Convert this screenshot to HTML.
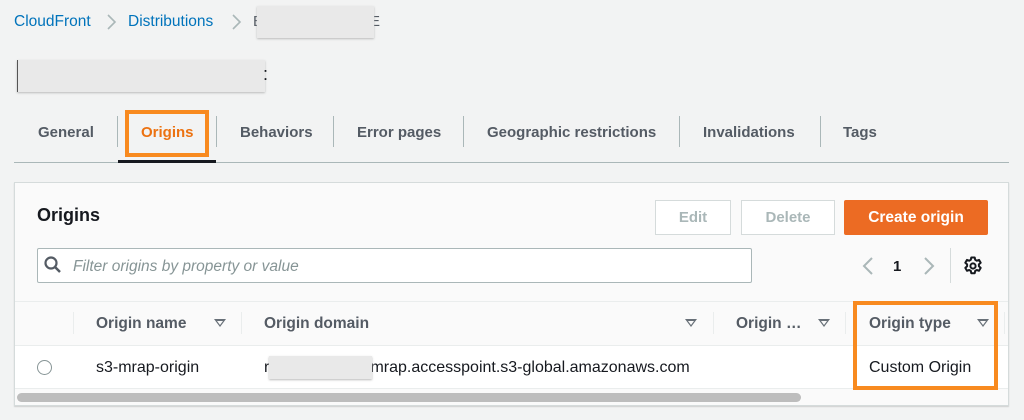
<!DOCTYPE html>
<html><head><style>
*{box-sizing:border-box;margin:0;padding:0}
body{width:1024px;height:420px;background:#f2f3f3;font-family:"Liberation Sans",Arial,sans-serif;position:relative;overflow:hidden;color:#16191f}
.a{position:absolute;white-space:nowrap}
.bc{color:#0073bb;font-size:15.5px;top:13px}
.tab{top:124px;font-size:15px;font-weight:bold;color:#545b64}
.sep{position:absolute;width:1px;background:#aab7b8}
.th{top:315px;font-size:15.5px;font-weight:bold;color:#545b64}
.tri{position:absolute;top:319px;width:0;height:0;border-left:6px solid transparent;border-right:6px solid transparent;border-top:8px solid #687078}
.tri:after{content:"";position:absolute;left:-3px;top:-6.5px;border-left:3px solid transparent;border-right:3px solid transparent;border-top:4px solid #fafafa}
</style></head><body>
<div class="a bc" style="left:14px">CloudFront</div>
<svg class="a" style="left:105px;top:12px" width="12" height="20"><path d="M3 3 L10 10 L3 17" fill="none" stroke="#aab7b8" stroke-width="1.6"/></svg>
<div class="a bc" style="left:128px">Distributions</div>
<svg class="a" style="left:230px;top:12px" width="12" height="20"><path d="M3 3 L10 10 L3 17" fill="none" stroke="#aab7b8" stroke-width="1.6"/></svg>
<div class="a" style="left:253px;top:13px;font-size:15px;color:#545b64">E</div>
<div class="a" style="left:370px;top:13px;font-size:15px;color:#545b64">E</div>
<div class="a" style="left:257px;top:6px;width:117px;height:32px;background:#e9e9e9;box-shadow:0 1px 2px #bbb"></div>
<div class="a" style="left:17px;top:60px;width:248px;height:32px;background:#e9e9e9;box-shadow:0 1px 2px #bbb;border-left:1px solid #555"></div>
<div class="a" style="left:263px;top:64px;font-size:18px;color:#16191f">:</div>

<div class="a tab" style="left:38px">General</div>
<div class="sep" style="left:117px;top:116px;height:31px"></div>
<div class="a tab" style="left:141px;color:#ec7211">Origins</div>
<div class="sep" style="left:216px;top:116px;height:31px"></div>
<div class="a tab" style="left:240px">Behaviors</div>
<div class="sep" style="left:333px;top:116px;height:31px"></div>
<div class="a tab" style="left:357px">Error pages</div>
<div class="sep" style="left:463px;top:116px;height:31px"></div>
<div class="a tab" style="left:487px">Geographic restrictions</div>
<div class="sep" style="left:679px;top:116px;height:31px"></div>
<div class="a tab" style="left:703px">Invalidations</div>
<div class="sep" style="left:820px;top:116px;height:31px"></div>
<div class="a tab" style="left:843px">Tags</div>
<div class="a" style="left:14px;top:162px;width:995px;height:1px;background:#aab7b8"></div>
<div class="a" style="left:118px;top:160px;width:98px;height:3px;background:#16191f"></div>
<div class="a" style="left:125px;top:110px;width:84px;height:47px;border:4px solid #f88a1f"></div>

<div class="a" style="left:14px;top:182px;width:995px;height:224px;background:#fafafa;border:1px solid #d5dbdb;box-shadow:0 1px 1px rgba(0,0,0,.15)"></div>
<div class="a" style="left:37px;top:205px;font-size:18px;font-weight:bold">Origins</div>
<div class="a" style="left:655px;top:200px;width:76px;height:35px;border:1px solid #d5dbdb;background:#fff;color:#aab7b8;font-weight:bold;font-size:15px;text-align:center;line-height:33px">Edit</div>
<div class="a" style="left:741px;top:200px;width:94px;height:35px;border:1px solid #d5dbdb;background:#fff;color:#aab7b8;font-weight:bold;font-size:15px;text-align:center;line-height:33px">Delete</div>
<div class="a" style="left:844px;top:200px;width:144px;height:35px;background:#ec6b23;border-radius:2px;color:#fff;font-weight:bold;font-size:15.5px;text-align:center;line-height:35px">Create origin</div>
<div class="a" style="left:37px;top:248px;width:715px;height:35px;border:1px solid #aab7b8;background:#fff;border-radius:2px"></div>
<svg class="a" style="left:44px;top:256px" width="18" height="18" viewBox="0 0 18 18"><circle cx="7" cy="7" r="5.5" fill="none" stroke="#545b64" stroke-width="2.2"/><line x1="11" y1="11" x2="16" y2="16" stroke="#545b64" stroke-width="2.5"/></svg>
<div class="a" style="left:73px;top:258px;font-size:15.5px;font-style:italic;color:#879596">Filter origins by property or value</div>
<svg class="a" style="left:861px;top:256px" width="14" height="20"><path d="M11 2 L3 10 L11 18" fill="none" stroke="#aab7b8" stroke-width="2"/></svg>
<div class="a" style="left:893px;top:258px;font-size:15px;font-weight:bold">1</div>
<svg class="a" style="left:922px;top:256px" width="14" height="20"><path d="M3 2 L11 10 L3 18" fill="none" stroke="#aab7b8" stroke-width="2"/></svg>
<div class="sep" style="left:950px;top:248px;height:35px;background:#d5dbdb"></div>
<svg class="a" style="left:962px;top:255px" width="22" height="22" viewBox="0 0 22 22"><g fill="none" stroke="#16191f" stroke-width="2" stroke-linejoin="round"><path d="M9.3 2.5h3.4l.5 2.3 1.6.9 2.2-.8 1.7 2.9-1.8 1.6v1.9l1.8 1.6-1.7 2.9-2.2-.8-1.6.9-.5 2.3H9.3l-.5-2.3-1.6-.9-2.2.8-1.7-2.9 1.8-1.6V9.4L3.3 7.8 5 4.9l2.2.8 1.6-.9z"/><circle cx="11" cy="11" r="2.6"/></g></svg>

<div class="a" style="left:15px;top:301px;width:993px;height:1px;background:#eaeded"></div>
<div class="sep" style="left:73px;top:312px;height:22px;background:#eaeded"></div>
<div class="a th" style="left:96px">Origin name</div>
<div class="tri" style="left:214px"></div>
<div class="sep" style="left:241px;top:312px;height:22px;background:#eaeded"></div>
<div class="a th" style="left:264px">Origin domain</div>
<div class="tri" style="left:685px"></div>
<div class="sep" style="left:713px;top:312px;height:22px;background:#eaeded"></div>
<div class="a th" style="left:736px">Origin …</div>
<div class="tri" style="left:818px"></div>
<div class="sep" style="left:845px;top:312px;height:22px;background:#eaeded"></div>
<div class="a th" style="left:869px">Origin type</div>
<div class="tri" style="left:977px"></div>
<div class="sep" style="left:1004px;top:312px;height:22px;background:#eaeded"></div>
<div class="a" style="left:15px;top:345px;width:993px;height:44px;background:#fff;border-top:1px solid #eaeded;border-bottom:1px solid #eaeded"></div>
<div class="a" style="left:37px;top:360px;width:15px;height:15px;border-radius:50%;border:1px solid #879596;background:#fff"></div>
<div class="a" style="left:96px;top:359px;font-size:16px">s3-mrap-origin</div>
<div class="a" style="left:264px;top:359px;font-size:16px">r</div>
<div class="a" style="left:366px;top:359px;font-size:16px">.mrap.accesspoint.s3-global.amazonaws.com</div>
<div class="a" style="left:269px;top:356px;width:103px;height:23px;background:#e9e9e9;box-shadow:0 1px 2px #bbb"></div>
<div class="a" style="left:869px;top:359px;font-size:16px">Custom Origin</div>
<div class="a" style="left:17px;top:393px;width:784px;height:9px;border-radius:5px;background:#bdbdbd"></div>
<div class="a" style="left:853px;top:301px;width:145px;height:89px;border:4px solid #f88a1f"></div>
</body></html>
